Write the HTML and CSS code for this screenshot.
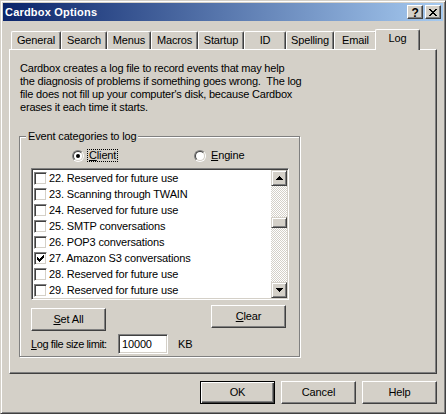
FILE: index.html
```html
<!DOCTYPE html>
<html>
<head>
<meta charset="utf-8">
<title>Cardbox Options</title>
<link rel="stylesheet" href="styles.css">
</head>
<body>
<div class="window">
  <div class="titlebar">
    <span class="title">Cardbox Options</span>
    <div class="tb-buttons">
      <span class="tb-btn tb-help">?</span>
      <span class="tb-btn"><svg width="8" height="7" viewBox="0 0 8 7" shape-rendering="crispEdges"><path fill="#000" d="M0 0h2v1H0zM6 0h2v1H6zM1 1h2v1H1zM5 1h2v1H5zM2 2h4v1H2zM3 3h2v1H3zM2 4h4v1H2zM1 5h2v1H1zM5 5h2v1H5zM0 6h2v1H0zM6 6h2v1H6z"/></svg></span>
    </div>
  </div>
  <div class="client">
    <div class="tabs">
      <div class="tab t-general">General</div>
      <div class="tab t-search">Search</div>
      <div class="tab t-menus">Menus</div>
      <div class="tab t-macros">Macros</div>
      <div class="tab t-startup">Startup</div>
      <div class="tab t-id">ID</div>
      <div class="tab t-spelling">Spelling</div>
      <div class="tab t-email">Email</div>
      <div class="tab t-log selected">Log</div>
    </div>
    <div class="panel">
      <p class="intro">Cardbox creates a log file to record events that may help<br>the diagnosis of problems if something goes wrong.&nbsp; The log<br>file does not fill up your computer's disk, because Cardbox<br>erases it each time it starts.</p>
      <div class="group">
        <span class="group-label">Event categories to log</span>
        <div class="radios">
          <div class="radio-item first">
            <span class="radio"><span class="radio-in"><span class="dot"></span></span></span>
            <span class="radio-text focus"><u>C</u>lient</span>
          </div>
          <div class="radio-item">
            <span class="radio"><span class="radio-in"></span></span>
            <span class="radio-text"><u>E</u>ngine</span>
          </div>
        </div>
        <div class="listbox">
          <div class="items">
            <div class="item"><span class="check"></span><span>22. Reserved for future use</span></div>
            <div class="item"><span class="check"></span><span>23. Scanning through TWAIN</span></div>
            <div class="item"><span class="check"></span><span>24. Reserved for future use</span></div>
            <div class="item"><span class="check"></span><span>25. SMTP conversations</span></div>
            <div class="item"><span class="check"></span><span>26. POP3 conversations</span></div>
            <div class="item"><span class="check"><svg width="7" height="7" viewBox="0 0 7 7" shape-rendering="crispEdges"><path fill="#000" d="M0 2h1v3H0zM1 3h1v3H1zM2 4h1v3H2zM3 3h1v3H3zM4 2h1v3H4zM5 1h1v3H5zM6 0h1v3H6z"/></svg></span><span>27. Amazon S3 conversations</span></div>
            <div class="item"><span class="check"></span><span>28. Reserved for future use</span></div>
            <div class="item"><span class="check"></span><span>29. Reserved for future use</span></div>
          </div>
          <div class="scrollbar">
            <div class="sb-btn"><svg width="7" height="4" viewBox="0 0 7 4" shape-rendering="crispEdges"><path fill="#000" d="M3 0h1v1H3zM2 1h3v1H2zM1 2h5v1H1zM0 3h7v1H0z"/></svg></div>
            <div class="sb-track"><div class="sb-thumb"></div></div>
            <div class="sb-btn"><svg width="7" height="4" viewBox="0 0 7 4" shape-rendering="crispEdges"><path fill="#000" d="M0 0h7v1H0zM1 1h5v1H1zM2 2h3v1H2zM3 3h1v1H3z"/></svg></div>
          </div>
        </div>
        <div class="group-buttons">
          <div class="btn setall"><u>S</u>et All</div>
          <div class="btn"><u>C</u>lear</div>
        </div>
        <div class="logrow">
          <span class="loglabel"><u>L</u>og file size limit:</span>
          <span class="edit">10000</span>
          <span class="kb">KB</span>
        </div>
      </div>
    </div>
    <div class="dlg-buttons">
      <div class="btn default">OK</div>
      <div class="btn">Cancel</div>
      <div class="btn">Help</div>
    </div>
  </div>
</div>
</body>
</html>
```
FILE: styles.css
```css
* { box-sizing: border-box; }
html, body { margin: 0; padding: 0; }
body {
  width: 446px;
  height: 414px;
  overflow: hidden;
  background: #d4d0c8;
  font-family: "Liberation Sans", Arial, sans-serif;
  font-size: 11px;
  line-height: 13px;
  color: #000;
  letter-spacing: -0.15px;
}
u { text-decoration: underline; text-underline-offset: 1px; }

.window {
  width: 446px;
  height: 414px;
  border: 1px solid;
  border-color: #d4d0c8 #404040 #404040 #d4d0c8;
  box-shadow: inset 1px 1px #fff, inset -1px -1px #808080;
  padding: 2px;
  display: flex;
  flex-direction: column;
  background: #d4d0c8;
}

.titlebar {
  height: 18px;
  flex: none;
  display: flex;
  align-items: center;
  justify-content: space-between;
  padding: 0 2px;
  background: linear-gradient(to right, #0a246a, #a6caf0);
}
.title {
  color: #fff;
  font-weight: bold;
  letter-spacing: 0.2px;
  line-height: 18px;
}
.tb-buttons { display: flex; gap: 2px; }
.tb-btn {
  width: 16px;
  height: 14px;
  display: flex;
  align-items: center;
  justify-content: center;
  background: #d4d0c8;
  border: 1px solid;
  border-color: #fff #404040 #404040 #fff;
  box-shadow: inset -1px -1px #808080;
}
.tb-help { font-weight: bold; font-size: 12px; line-height: 12px; padding-top: 1px; }

.client {
  flex: 1;
  display: flex;
  flex-direction: column;
  padding: 8px 6px 7px 6px;
}

.tabs {
  height: 20px;
  display: flex;
  align-items: flex-end;
  padding-left: 2px;
}
.tab {
  height: 18px;
  text-align: center;
  padding-top: 2px;
  border-top: 1px solid #fff;
  border-left: 1px solid #fff;
  border-right: 1px solid #404040;
  box-shadow: inset -1px 0 #808080;
  border-radius: 2px 2px 0 0;
  background: #d4d0c8;
}
.t-general { width: 50px; }
.t-search { width: 46px; }
.t-menus { width: 44px; }
.t-macros { width: 47px; }
.t-startup { width: 46px; }
.t-id { width: 42px; }
.t-spelling { width: 48px; }
.t-email { width: 43px; }
.t-log { width: 41px; }
.tab.selected {
  width: 45px;
  height: 21px;
  margin: 0 -2px -1px -2px;
  position: relative;
  z-index: 1;
}

.panel {
  height: 325px;
  flex: none;
  border-top: 1px solid #fff;
  border-left: 1px solid #fff;
  border-right: 1px solid #404040;
  border-bottom: 1px solid #404040;
  box-shadow: inset -1px -1px #808080;
  padding: 12px 0 0 10px;
}
.intro {
  margin: 0;
  letter-spacing: -0.2px;
  white-space: nowrap;
}

.group {
  position: relative;
  margin: 22px 0 0 -1px;
  width: 281px;
  height: 221px;
  border: 1px solid #808080;
  box-shadow: 1px 1px #fff, inset 1px 1px #fff;
  padding: 12px 0 0 11px;
}
.group-label {
  position: absolute;
  top: -7px;
  left: 6px;
  padding: 0 2px;
  background: #d4d0c8;
}

.radios {
  height: 13px;
  display: flex;
  align-items: center;
  padding-left: 41px;
}
.radio-item { display: flex; align-items: center; gap: 4px; }
.radio-item.first { width: 122px; }
.radio {
  width: 12px;
  height: 12px;
  border-radius: 50%;
  border: 1px solid;
  border-color: #808080 #fff #fff #808080;
  display: flex;
}
.radio-in {
  width: 10px;
  height: 10px;
  border-radius: 50%;
  border: 1px solid;
  border-color: #404040 #d4d0c8 #d4d0c8 #404040;
  background: #fff;
  display: flex;
  align-items: center;
  justify-content: center;
}
.dot { width: 4px; height: 4px; border-radius: 50%; background: #000; }
.radio-text { padding: 0 1px; line-height: 11px; }
.radio-text.focus { outline: 1px dotted #000; }

.listbox {
  margin-top: 6px;
  width: 258px;
  height: 132px;
  border: 1px solid;
  border-color: #808080 #fff #fff #808080;
  box-shadow: inset 1px 1px #404040, inset -1px -1px #d4d0c8;
  padding: 1px;
  background: #fff;
  display: flex;
}
.items { flex: 1; overflow: hidden; }
.item {
  height: 16px;
  display: flex;
  align-items: center;
  gap: 2px;
  padding-left: 1px;
  white-space: nowrap;
}
.check {
  width: 13px;
  height: 13px;
  flex: none;
  border: 1px solid;
  border-color: #808080 #fff #fff #808080;
  box-shadow: inset 1px 1px #404040, inset -1px -1px #d4d0c8;
  background: #fff;
  display: flex;
  align-items: center;
  justify-content: center;
}
.check svg { display: block; }

.scrollbar {
  width: 16px;
  flex: none;
  display: flex;
  flex-direction: column;
}
.sb-btn {
  width: 16px;
  height: 16px;
  flex: none;
  background: #d4d0c8;
  border: 1px solid;
  border-color: #d4d0c8 #404040 #404040 #d4d0c8;
  box-shadow: inset 1px 1px #fff, inset -1px -1px #808080;
  display: flex;
  align-items: center;
  justify-content: center;
}
.sb-btn svg { display: block; }
.sb-track {
  flex: 1;
  background: repeating-conic-gradient(#d4d0c8 0 25%, #fff 0 50%) 0 0 / 2px 2px;
}
.sb-thumb {
  margin-top: 31px;
  height: 11px;
  background: #d4d0c8;
  border: 1px solid;
  border-color: #d4d0c8 #404040 #404040 #d4d0c8;
  box-shadow: inset 1px 1px #fff, inset -1px -1px #808080;
}

.btn {
  width: 75px;
  height: 23px;
  display: flex;
  align-items: center;
  justify-content: center;
  background: #d4d0c8;
  border: 1px solid;
  border-color: #fff #404040 #404040 #fff;
  box-shadow: inset -1px -1px #808080;
}
.btn.default {
  border-color: #000;
  box-shadow: inset 1px 1px #fff, inset -1px -1px #404040, inset -2px -2px #808080;
}

.group-buttons {
  margin-top: 5px;
  width: 255px;
  display: flex;
  justify-content: space-between;
  align-items: flex-start;
}
.btn.setall { margin-top: 3px; }

.logrow {
  margin-top: 3px;
  height: 20px;
  display: flex;
  align-items: center;
}
.loglabel { width: 87px; letter-spacing: -0.4px; }
.edit {
  width: 50px;
  height: 20px;
  border: 1px solid;
  border-color: #808080 #fff #fff #808080;
  box-shadow: inset 1px 1px #404040, inset -1px -1px #d4d0c8;
  background: #fff;
  padding-left: 3px;
  display: flex;
  align-items: center;
}
.kb { margin-left: 10px; }

.dlg-buttons {
  margin-top: 7px;
  display: flex;
  justify-content: flex-end;
  gap: 6px;
}
```
